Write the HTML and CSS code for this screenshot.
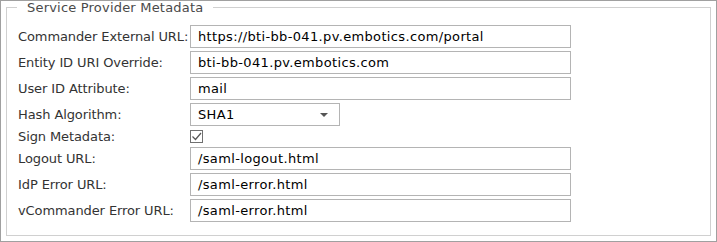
FILE: index.html
```html
<!DOCTYPE html>
<html lang="en">
<head>
    <meta charset="UTF-8">
    <title>Service Provider Metadata</title>
    <link rel="stylesheet" href="styles.css">
</head>
<body>
    <div class="panel">
        <fieldset class="group">
            <legend>Service Provider Metadata</legend>
            <div class="form">
                <label class="label">Commander External URL:</label>
                <div class="field"><div class="input wide">https://bti-bb-041.pv.embotics.com/portal</div></div>

                <label class="label">Entity ID URI Override:</label>
                <div class="field"><div class="input wide">bti-bb-041.pv.embotics.com</div></div>

                <label class="label">User ID Attribute:</label>
                <div class="field"><div class="input wide">mail</div></div>

                <label class="label">Hash Algorithm:</label>
                <div class="field">
                    <div class="input select">
                        <span>SHA1</span>
                        <span class="arrow"></span>
                    </div>
                </div>

                <label class="label">Sign Metadata:</label>
                <div class="field small">
                    <div class="checkbox">
                        <svg width="11" height="11" viewBox="0 0 11 11">
                            <path d="M1.5 5.5 L4.5 8.5 L10 2" fill="none" stroke="#555" stroke-width="1.2"/>
                        </svg>
                    </div>
                </div>

                <label class="label">Logout URL:</label>
                <div class="field"><div class="input wide">/saml-logout.html</div></div>

                <label class="label">IdP Error URL:</label>
                <div class="field"><div class="input wide">/saml-error.html</div></div>

                <label class="label">vCommander Error URL:</label>
                <div class="field"><div class="input wide">/saml-error.html</div></div>
            </div>
        </fieldset>
    </div>
</body>
</html>
```

FILE: styles.css
```css
* {
    margin: 0;
    padding: 0;
    box-sizing: border-box;
}

body {
    font-family: "DejaVu Sans", Verdana, sans-serif;
    font-size: 13px;
    background: #fff;
}

.panel {
    width: 717px;
    height: 242px;
    border: 1px solid #a0a0a0;
    background: #fff;
}

.group {
    margin: 0 5px;
    height: 235px;
    border: 1px solid #d0d0d0;
    padding: 0 11px;
}

.group legend {
    margin-left: -1px;
    padding: 0 10px;
    line-height: 13px;
    font-size: 13px;
    letter-spacing: 0.2px;
    color: #4a4a4a;
}

.form {
    display: grid;
    grid-template-columns: 172px 1fr;
    grid-template-rows: 23px 23px 23px 23px 15px 23px 23px 23px;
    row-gap: 3px;
    margin-top: 11px;
}

.label {
    display: flex;
    align-items: center;
    color: #333;
    letter-spacing: -0.1px;
    white-space: nowrap;
}

.field {
    display: flex;
    align-items: stretch;
}

.field.small {
    align-items: center;
}

.input {
    border: 1px solid #b4b4b4;
    padding: 0 7px;
    display: flex;
    align-items: center;
    color: #000;
    letter-spacing: 0.35px;
    white-space: nowrap;
}

.input.wide {
    width: 381px;
}

.input.select {
    width: 150px;
    justify-content: space-between;
}

.arrow {
    width: 0;
    height: 0;
    border-left: 4px solid transparent;
    border-right: 4px solid transparent;
    border-top: 4px solid #555;
    margin-right: 4px;
}

.checkbox {
    width: 13px;
    height: 13px;
    border: 1px solid #707070;
    background: #fff;
    display: flex;
    align-items: center;
    justify-content: center;
}
```
